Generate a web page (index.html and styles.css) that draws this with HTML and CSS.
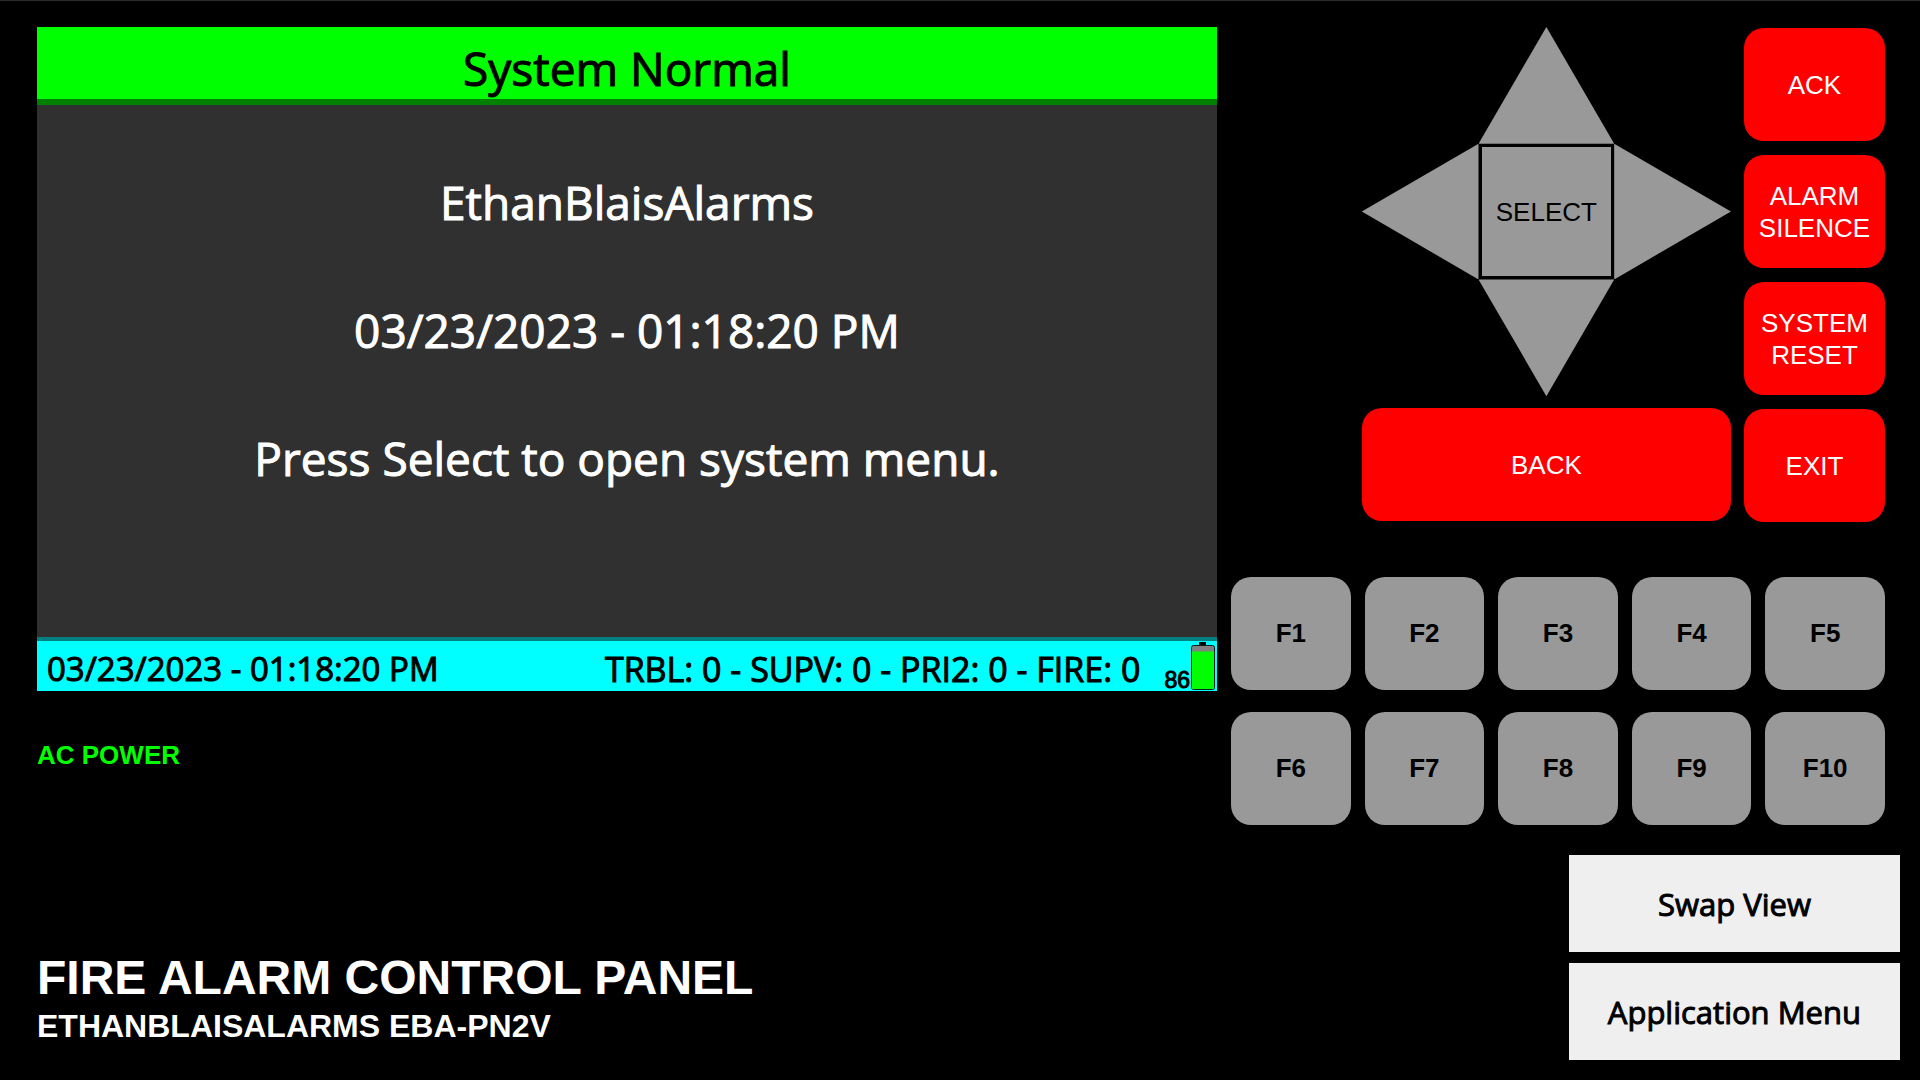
FILE: index.html
```html
<!DOCTYPE html>
<html lang="en">
<head>
<meta charset="utf-8">
<title>Fire Alarm Control Panel</title>
<link rel="stylesheet" href="styles.css">
</head>
<body>
<main class="panel">
  <div class="top">
    <section class="display">
      <h1 class="display-head">System Normal</h1>
      <div class="display-body">
        <p>EthanBlaisAlarms</p>
        <p>03/23/2023 - 01:18:20 PM</p>
        <p>Press Select to open system menu.</p>
      </div>
      <div class="status">
        <span class="status-time">03/23/2023 - 01:18:20 PM</span>
        <span class="status-counts">TRBL: 0 - SUPV: 0 - PRI2: 0 - FIRE: 0</span>
        <span class="percent">86</span>
        <svg class="battery" width="24" height="48" viewBox="0 0 24 48" aria-hidden="true">
          <rect x="8" y="0" width="7" height="4" fill="#000"/>
          <rect x="0.5" y="3.5" width="23" height="44" rx="2" fill="#808080" stroke="#002020"/>
          <path d="M1 9.500H23V46a1 1 0 0 1-1 1H2a1 1 0 0 1-1-1z" fill="#0f0"/>
        </svg>
      </div>
    </section>
    <section class="keys">
      <div class="controls">
        <div class="nav">
          <div class="dpad">
            <button class="arrow up" aria-label="Up"></button>
            <button class="arrow left" aria-label="Left"></button>
            <button class="select">SELECT</button>
            <button class="arrow right" aria-label="Right"></button>
            <button class="arrow down" aria-label="Down"></button>
          </div>
          <button class="key red">BACK</button>
        </div>
        <div class="actions">
          <button class="key red">ACK</button>
          <button class="key red">ALARM SILENCE</button>
          <button class="key red">SYSTEM RESET</button>
          <button class="key red">EXIT</button>
        </div>
      </div>
      <div class="functions">
        <button class="key gray">F1</button>
        <button class="key gray">F2</button>
        <button class="key gray">F3</button>
        <button class="key gray">F4</button>
        <button class="key gray">F5</button>
        <button class="key gray">F6</button>
        <button class="key gray">F7</button>
        <button class="key gray">F8</button>
        <button class="key gray">F9</button>
        <button class="key gray">F10</button>
      </div>
    </section>
    <p class="power">AC POWER</p>
  </div>
  <footer class="bottom">
    <div class="brand">
      <h2>FIRE ALARM CONTROL PANEL</h2>
      <p>ETHANBLAISALARMS EBA-PN2V</p>
    </div>
    <div class="menu">
      <button class="menu-button">Swap View</button>
      <button class="menu-button">Application Menu</button>
    </div>
  </footer>
</main>
</body>
</html>
```
FILE: styles.css
```css
* {
  box-sizing: border-box;
  margin: 0;
  padding: 0;
}

body {
  background: #000;
  color: #fff;
  font-family: "Liberation Sans", Arial, sans-serif;
}

button {
  border: 0;
  font: inherit;
  cursor: pointer;
}

.panel {
  min-height: 100vh;
  display: flex;
  flex-direction: column;
  justify-content: space-between;
  border-top: 1px solid #2c2c2c;
  padding-bottom: 20px;
}

.top {
  display: grid;
  grid-template-columns: 1180fr 654fr;
  grid-template-rows: auto 1fr;
  column-gap: 14px;
  padding: 26px 35px 0 37px;
}

/* A thin outline gives the regular weight a medium look. */
.display,
.menu {
  font-family: "Open Sans", "Noto Sans", sans-serif;
  font-weight: 400;
  -webkit-text-stroke: 1px currentColor;
}

.display {
  aspect-ratio: 16 / 9;
  display: flex;
  flex-direction: column;
  background: #303030;
}

.display-head {
  height: 78px;
  border-bottom: 6px solid #008000;
  background: #0f0;
  color: #000;
  font-size: 46px;
  font-weight: 400;
  line-height: 82px;
  text-align: center;
}

.display-body {
  flex: 1;
  display: flex;
  flex-direction: column;
  gap: 64px;
  padding-top: 65px;
  font-size: 46px;
  line-height: 64px;
  text-align: center;
}

.status {
  display: flex;
  height: 54px;
  padding: 0 2px 0 10px;
  border-top: 4px solid #008080;
  background: #0ff;
  color: #000;
  font-size: 34px;
  line-height: 56px;
  white-space: nowrap;
}

.status-time {
  font-size: 33px;
}

.status-counts {
  margin-left: auto;
}

.percent {
  align-self: flex-end;
  margin: 0 1px 0 24px;
  font: 23px/22px "Liberation Sans", Arial, sans-serif;
}

.battery {
  align-self: flex-end;
  margin-bottom: 1px;
}

.keys {
  grid-column: 2;
  grid-row: 1 / 3;
}

.controls {
  display: flex;
  gap: 13px;
  margin-left: 20%;
  font-size: 26px;
  line-height: 32px;
}

.nav {
  flex: 369;
  display: flex;
  flex-direction: column;
  justify-content: space-between;
  padding-bottom: 1px;
}

.dpad {
  display: grid;
  grid-template-columns: 117fr 136fr 117fr;
  grid-template-rows: 117fr 136fr 117fr;
  aspect-ratio: 1;
}

.arrow,
.select,
.gray {
  background: #999;
  color: #000;
}

.up {
  grid-area: 1 / 2;
  clip-path: polygon(50% 0, 100% 100%, 0 100%);
}

.left {
  grid-area: 2 / 1;
  clip-path: polygon(0 50%, 100% 0, 100% 100%);
}

.select {
  grid-area: 2 / 2;
  border: 3px solid #000;
}

.right {
  grid-area: 2 / 3;
  clip-path: polygon(0 0, 100% 50%, 0 100%);
}

.down {
  grid-area: 3 / 2;
  clip-path: polygon(0 0, 100% 0, 50% 100%);
}

.actions {
  flex: 141;
  display: flex;
  flex-direction: column;
  gap: 14px;
  padding-top: 1px;
}

.key {
  height: 113px;
  border-radius: 20px;
}

.red {
  background: #f00;
  color: #fff;
}

.functions {
  display: grid;
  grid-template-columns: repeat(5, 1fr);
  gap: 22px 14px;
  margin-top: 55px;
  font-size: 26px;
  font-weight: bold;
}

.power {
  margin-top: 48px;
  color: #0f0;
  font-size: 26px;
  font-weight: bold;
  line-height: 32px;
}

.bottom {
  display: flex;
  justify-content: space-between;
  align-items: flex-end;
  padding: 0 20px 0 37px;
}

.brand {
  padding-bottom: 14px;
  font-size: 32px;
  font-weight: bold;
  line-height: 40px;
}

.brand h2 {
  font-size: 48px;
  line-height: 56px;
}

.menu {
  display: grid;
  gap: 11px;
  font-size: 31px;
}

.menu-button {
  height: 97px;
  padding: 0 39px;
  background: #efefef;
  color: #000;
}
```
